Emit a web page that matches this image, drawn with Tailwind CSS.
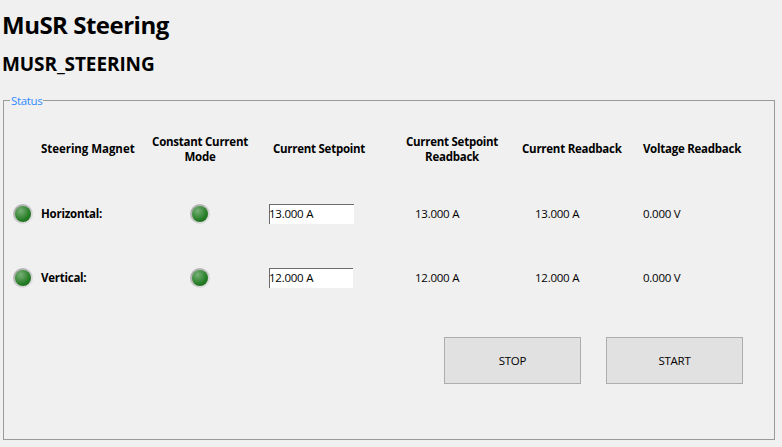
<!DOCTYPE html>
<html>
<head>
<meta charset="utf-8">
<script src="https://cdn.jsdelivr.net/npm/@tailwindcss/browser@4"></script>
</head>
<body class="w-[782px] h-[447px] overflow-hidden bg-[#f0f0f0] text-black font-['Open_Sans',sans-serif]">
<div class="flex flex-col pl-[3px]">
  <h1 class="h-[44px] pt-[7px] -ml-px text-[24px] leading-[36px] font-bold tracking-[-0.5px]">MuSR Steering</h1>
  <h2 class="h-[49px] pt-[6px] -ml-px text-[19px] leading-[28px] font-bold tracking-[-0.1px]">MUSR_STEERING</h2>
  <div class="relative mt-[7px] w-[772px] h-[340px] border border-[#9a9a9a]">
    <span class="absolute left-[6px] -top-[8px] bg-[#f0f0f0] px-px text-[11.5px] leading-[16px] text-[#2f8cff] tracking-[-0.35px]">Status</span>
    <div class="grid grid-cols-[37px_99px_120px_120px_144px_96px_146px] grid-rows-[64px_64px_64px] pt-[17px] text-[11.5px] tracking-[-0.25px] items-center whitespace-nowrap">
      <div></div>
      <div class="font-bold tracking-[-0.05px] pb-[2px]">Steering Magnet</div>
      <div class="font-bold text-center leading-[15px] pb-[2px]">Constant Current<br>Mode</div>
      <div class="font-bold text-center pb-[2px] pr-[2px]">Current Setpoint</div>
      <div class="font-bold text-center leading-[15px] pb-[2px]">Current Setpoint<br>Readback</div>
      <div class="font-bold pb-[2px] -ml-[2px]">Current Readback</div>
      <div class="font-bold text-center pb-[2px] pr-[2px]">Voltage Readback</div>

      <div class="pl-[9px]"><div class="flex size-[20px] items-center justify-center rounded-full bg-[linear-gradient(135deg,#a0a0a0,#ececec)]"><div class="size-[16px] rounded-full bg-[radial-gradient(circle_at_35%_30%,#78b078,#257d25_60%,#126412)]"></div></div></div>
      <div class="font-bold">Horizontal:</div>
      <div class="flex justify-center"><div class="flex size-[20px] items-center justify-center rounded-full bg-[linear-gradient(135deg,#a0a0a0,#ececec)]"><div class="size-[16px] rounded-full bg-[radial-gradient(circle_at_35%_30%,#78b078,#257d25_60%,#126412)]"></div></div></div>
      <div class="pl-[9px]"><div class="w-[85px] h-[20px] bg-white border-t border-l border-[#6a6a6a] leading-[17px] -indent-px">13.000 A</div></div>
      <div class="pl-[35px]">13.000 A</div>
      <div class="pl-[11px]">13.000 A</div>
      <div class="pl-[23px]">0.000 V</div>

      <div class="pl-[9px]"><div class="flex size-[20px] items-center justify-center rounded-full bg-[linear-gradient(135deg,#a0a0a0,#ececec)]"><div class="size-[16px] rounded-full bg-[radial-gradient(circle_at_35%_30%,#78b078,#257d25_60%,#126412)]"></div></div></div>
      <div class="font-bold">Vertical:</div>
      <div class="flex justify-center"><div class="flex size-[20px] items-center justify-center rounded-full bg-[linear-gradient(135deg,#a0a0a0,#ececec)]"><div class="size-[16px] rounded-full bg-[radial-gradient(circle_at_35%_30%,#78b078,#257d25_60%,#126412)]"></div></div></div>
      <div class="pl-[9px]"><div class="w-[84px] h-[20px] bg-white border-t border-l border-[#6a6a6a] leading-[17px] -indent-px">12.000 A</div></div>
      <div class="pl-[35px]">12.000 A</div>
      <div class="pl-[11px]">12.000 A</div>
      <div class="pl-[23px]">0.000 V</div>
    </div>
    <div class="flex gap-[25px] pl-[440px] pt-[27px] text-[11.5px] tracking-[-0.25px]">
      <button class="w-[137px] h-[47px] bg-[#e1e1e1] border border-[#adadad]">STOP</button>
      <button class="w-[137px] h-[47px] bg-[#e1e1e1] border border-[#adadad]">START</button>
    </div>
  </div>
</div>
</body>
</html>
